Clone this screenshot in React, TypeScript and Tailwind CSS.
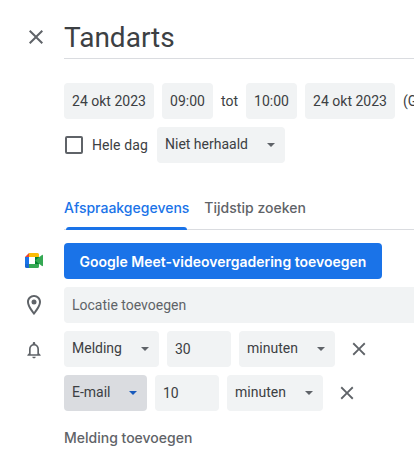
const Caret = ({ className = "border-t-[#5f6368]" }: { className?: string }) => (
  <span className={`w-0 h-0 border-x-[4px] border-x-transparent border-t-[4px] ${className}`} />
);

const CloseIcon = ({ size, className = "" }: { size: number; className?: string }) => (
  <svg width={size} height={size} viewBox="0 0 24 24" fill="#5f6368" className={`block shrink-0 ${className}`}>
    <path d="M19 6.410 17.590 5 12 10.590 6.410 5 5 6.410 10.590 12 5 17.590 6.410 19 12 13.410 17.590 19 19 17.590 13.410 12z" />
  </svg>
);

const PinIcon = ({ className = "" }: { className?: string }) => (
  <svg width="24" height="24" viewBox="0 0 24 24" fill="#5f6368" className={`block shrink-0 ${className}`}>
    <path d="M12 2C8.130 2 5 5.130 5 9c0 5.250 7 13 7 13s7-7.750 7-13c0-3.870-3.130-7-7-7zM7 9c0-2.760 2.240-5 5-5s5 2.240 5 5c0 2.880-2.880 7.190-5 9.880C9.920 16.210 7 11.850 7 9z" />
    <circle cx="12" cy="9" r="2.500" />
  </svg>
);

const BellIcon = ({ className = "" }: { className?: string }) => (
  <svg width="20" height="20" viewBox="0 0 24 24" fill="#5f6368" className={`block shrink-0 ${className}`}>
    <path d="M12 22c1.100 0 2-.9 2-2h-4c0 1.100.9 2 2 2zm6-6v-5c0-3.070-1.630-5.640-4.500-6.320V4c0-.83-.67-1.500-1.500-1.500s-1.500.67-1.500 1.500v.68C7.640 5.360 6 7.920 6 11v5l-2 2v1h16v-1l-2-2zm-2 1H8v-6c0-2.480 1.510-4.500 4-4.500s4 2.020 4 4.500v6z" />
  </svg>
);

const MeetLogo = () => (
  <svg width="18" height="15" viewBox="0 0 18 15" className="block">
    <path d="M4 0h8.500A1.500 1.500 0 0 1 14 1.500V4H4z" fill="#fbbc04" />
    <path d="M4 0v4H0z" fill="#ea4335" />
    <path d="M0 4h4v7H0z" fill="#1a73e8" />
    <path d="M0 11h4v4H1.500A1.500 1.500 0 0 1 0 13.500z" fill="#1967d2" />
    <path d="M4 11h10v2.500a1.500 1.500 0 0 1-1.500 1.500H4z" fill="#34a853" />
    <path d="M10 4h4v7h-4z" fill="#00832d" />
    <path d="M4 4h6v7H4z" fill="#fff" />
    <path d="M10 7.500 14 4.300l3-2.300c.4-.3 1-.1 1 .5v10c0 .6-.6.8-1 .5l-3-2.300z" fill="#34a853" />
  </svg>
);

const Chip = ({ children, className = "" }: { children: React.ReactNode; className?: string }) => (
  <div className={`h-9 flex items-center shrink-0 rounded text-[14px] text-[#3c4043] ${className}`}>
    {children}
  </div>
);

const Reminder = ({ type, value, active }: { type: string; value: string; active?: boolean }) => (
  <div className="flex items-center gap-2">
    <Chip className={`pl-2 pr-[10px] pb-px justify-between ${active ? "w-[83px] bg-[#dadce0]" : "w-[95px] bg-[#f1f3f4]"}`}>
      <span>{type}</span>
      <Caret className={active ? "border-t-[#185abc]" : "border-t-[#5f6368]"} />
    </Chip>
    <Chip className="w-16 pl-2 pt-px bg-[#f1f3f4]">{value}</Chip>
    <Chip className="w-24 pl-2 pr-[10px] pb-px justify-between bg-[#f1f3f4]">
      <span>minuten</span>
      <Caret />
    </Chip>
    <CloseIcon size={22} className="ml-[5px]" />
  </div>
);

export default function App() {
  return (
    <div
      className="w-[414px] h-[463px] overflow-hidden bg-white flex"
      style={{ fontFamily: "Roboto, sans-serif" }}
    >
      <div className="w-16 shrink-0 flex flex-col items-center">
        <CloseIcon size={24} className="mt-[25px] ml-[8px]" />
        <div className="mt-[204px] ml-[4px]">
          <MeetLogo />
        </div>
        <PinIcon className="mt-[25px] ml-[4px]" />
        <BellIcon className="mt-[23px] ml-[4px]" />
      </div>

      <div className="w-[400px] shrink-0">
        <div className="h-[59px] border-b border-[#dadce0] pt-[18px]">
          <div className="text-[28px] leading-[40px] text-[#3c4043]">Tandarts</div>
        </div>

        <div className="mt-6 flex items-center whitespace-nowrap">
          <Chip className="w-[90px] justify-center bg-[#f1f3f4]">24 okt 2023</Chip>
          <Chip className="w-[51px] ml-2 justify-center bg-[#f1f3f4]">09:00</Chip>
          <span className="mx-2 text-[14px] text-[#3c4043]">tot</span>
          <Chip className="w-[51px] justify-center bg-[#f1f3f4]">10:00</Chip>
          <Chip className="w-[90px] ml-2 justify-center bg-[#f1f3f4]">24 okt 2023</Chip>
          <span className="ml-2 text-[14px] text-[#3c4043]">(GMT+2:00)</span>
        </div>

        <div className="mt-2 flex items-center">
          <span className="ml-px w-[18px] h-[18px] rounded-[2px] border-2 border-[#5f6368]" />
          <span className="ml-[9px] w-[65px] text-[14px] tracking-[0.1px] text-[#3c4043]">Hele dag</span>
          <Chip className="w-32 pl-2 pr-[10px] pb-px justify-between bg-[#f1f3f4]">
            <span>Niet herhaald</span>
            <Caret />
          </Chip>
        </div>

        <div
          className="mt-[29px] h-[38px] w-[350px] border-b border-[#dadce0] flex gap-[15px] text-[14px] font-medium"
          style={{ fontFamily: "Inter, sans-serif" }}
        >
          <div className="flex flex-col items-start pt-[6px] h-[38px]">
            <span className="leading-[20px] text-[#1a73e8]">Afspraakgegevens</span>
            <span className="mt-auto ml-[2px] h-[3px] w-[121px] rounded-t-[3px] bg-[#1a73e8]" />
          </div>
          <span className="pt-[6px] leading-[20px] text-[#5f6368]">Tijdstip zoeken</span>
        </div>

        <div
          className="mt-[13px] flex h-9 w-[318px] items-center justify-center rounded bg-[#1a73e8] text-[14px] font-semibold text-white"
          style={{ fontFamily: "Inter, sans-serif" }}
        >
          Google Meet-videovergadering toevoegen
        </div>

        <div className="mt-2 h-9 w-[350px] rounded-l bg-[#f1f3f4] pl-2 flex items-center text-[14px] text-[#5f6368]">
          Locatie toevoegen
        </div>

        <div className="mt-2 flex flex-col gap-2">
          <Reminder type="Melding" value="30" />
          <Reminder type="E-mail" value="10" active />
        </div>

        <div
          className="mt-[17px] text-[14px] leading-[20px] font-medium text-[#5f6368]"
          style={{ fontFamily: "Inter, sans-serif" }}
        >
          Melding toevoegen
        </div>
      </div>
    </div>
  );
}
